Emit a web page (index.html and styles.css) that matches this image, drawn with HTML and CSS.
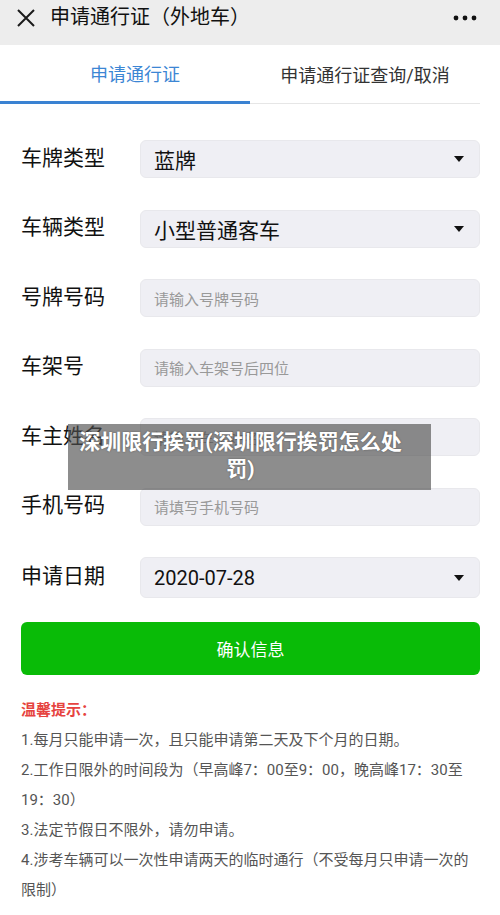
FILE: index.html
```html
<!DOCTYPE html>
<html lang="zh-CN">

<head>
    <meta charset="UTF-8">
    <meta name="viewport" content="width=device-width, initial-scale=1.0">
    <title>申请通行证（外地车）</title>
    <link rel="stylesheet" href="styles.css">
</head>

<body>
    <!-- Top bar -->
    <div class="topbar">
        <svg class="close-icon" width="20" height="20" viewBox="0 0 20 20">
            <path d="M2 2 L18 18 M18 2 L2 18" stroke="#1a1a1a" stroke-width="2" fill="none" />
        </svg>
        <div class="title">申请通行证（外地车）</div>
        <svg class="more-icon" width="24" height="8" viewBox="0 0 24 8">
            <circle cx="3" cy="4" r="2.4" fill="#111" />
            <circle cx="12" cy="4" r="2.4" fill="#111" />
            <circle cx="21" cy="4" r="2.4" fill="#111" />
        </svg>
    </div>

    <!-- Tabs -->
    <div class="tabs">
        <div class="tab active">申请通行证</div>
        <div class="tab">申请通行证查询/取消</div>
    </div>

    <!-- Form -->
    <form class="apply-form">
        <div class="row">
            <label>车牌类型</label>
            <div class="field select">蓝牌<span class="caret"></span></div>
        </div>
        <div class="row">
            <label>车辆类型</label>
            <div class="field select">小型普通客车<span class="caret"></span></div>
        </div>
        <div class="row">
            <label>号牌号码</label>
            <div class="field placeholder">请输入号牌号码</div>
        </div>
        <div class="row">
            <label>车架号</label>
            <div class="field placeholder">请输入车架号后四位</div>
        </div>
        <div class="row">
            <label>车主姓名</label>
            <div class="field placeholder">请输入车主姓名</div>
        </div>
        <div class="row">
            <label>手机号码</label>
            <div class="field placeholder">请填写手机号码</div>
        </div>
        <div class="row">
            <label>申请日期</label>
            <div class="field select date">2020-07-28<span class="caret"></span></div>
        </div>

        <button type="button" class="confirm">确认信息</button>
    </form>

    <!-- Tips -->
    <div class="tips">
        <div class="tips-title">温馨提示：</div>
        <p>1.每月只能申请一次，且只能申请第二天及下个月的日期。</p>
        <p>2.工作日限外的时间段为（早高峰7：00至9：00，晚高峰17：30至19：30）</p>
        <p>3.法定节假日不限外，请勿申请。</p>
        <p>4.涉考车辆可以一次性申请两天的临时通行（不受每月只申请一次的限制）</p>
    </div>

    <!-- Caption overlay -->
    <div class="caption">深圳限行挨罚(深圳限行挨罚怎么处罚)</div>
</body>

</html>
```

FILE: styles.css
```css
body {
    margin: 0;
    font-family: Roboto, "Noto Sans CJK SC", sans-serif;
    background-color: #fff;
    color: #1a1a1a;
    position: relative;
}

.topbar {
    display: flex;
    align-items: center;
    height: 45px;
    padding: 0 23px 12px 16px;
    box-sizing: border-box;
    background-color: #ededed;
}

.close-icon {
    margin-top: 2px;
}

.title {
    flex: 1;
    margin-left: 14px;
    font-size: 20px;
    line-height: 28px;
    color: #111;
}

.more-icon {
    margin-top: 2px;
}

.tabs {
    display: flex;
    height: 59px;
    padding-right: 20px;
}

.tab {
    flex: 1;
    display: flex;
    align-items: center;
    justify-content: center;
    font-size: 18px;
    color: #333;
    border-bottom: 1px solid #e6e6e6;
}

.tab.active {
    flex: 0 0 250px;
    box-sizing: border-box;
    padding-left: 20px;
    color: #3c86d4;
    border-bottom: 3px solid #3a82d2;
}

.apply-form {
    padding: 36px 20px 0 21px;
}

.row {
    display: flex;
    align-items: center;
    margin-bottom: 31.5px;
}

.row label {
    flex: 0 0 119px;
    font-size: 21px;
    line-height: 30px;
    margin-top: -3px;
    color: #111;
}

.field {
    flex: 1;
    display: flex;
    align-items: center;
    height: 38px;
    padding: 0 15px 0 13px;
    box-sizing: border-box;
    background-color: #efeff4;
    border: 1px solid #e8e8ec;
    border-radius: 6px;
    font-size: 21px;
    color: #111;
}

.field.placeholder {
    font-size: 15px;
    color: #999;
}

.field.date {
    height: 41px;
    font-size: 20px;
}

.caret {
    margin-left: auto;
    width: 0;
    height: 0;
    border-left: 5px solid transparent;
    border-right: 5px solid transparent;
    border-top: 6px solid #111;
}

.confirm {
    display: block;
    width: 100%;
    height: 53px;
    margin-top: -8px;
    border: none;
    border-radius: 6px;
    background-color: #09bb07;
    color: #fff;
    font-family: inherit;
    font-size: 17px;
}

.tips {
    padding: 20px 20px 0 21px;
    font-size: 15px;
    line-height: 30px;
    color: #555;
}

.tips-title {
    color: #e64340;
    font-weight: bold;
}

.tips p {
    margin: 0;
}

.caption {
    position: absolute;
    left: 68px;
    top: 424px;
    width: 363px;
    height: 66px;
    padding: 5px 24px 0 6px;
    box-sizing: border-box;
    background-color: rgba(80, 80, 80, 0.65);
    color: #fff;
    font-size: 21px;
    font-weight: bold;
    line-height: 27px;
    text-align: center;
    text-shadow: 0 0 2px rgba(0, 0, 0, 0.4);
}
```
